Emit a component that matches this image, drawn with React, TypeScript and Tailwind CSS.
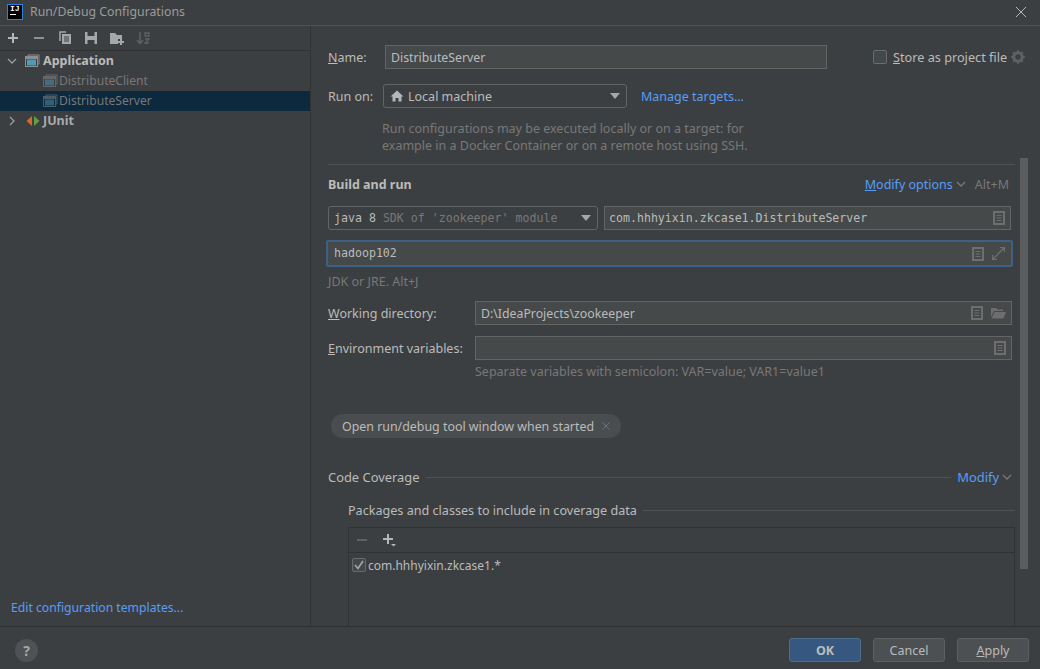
import React from "react";

const DocIcon = () => (
  <svg width="12" height="14" viewBox="0 0 12 14" className="shrink-0">
    <rect x="1" y="1" width="10" height="12" fill="none" stroke="#6e6e6e" strokeWidth="2" />
    <path d="M3.5 4.5h5M3.5 7h5M3.5 9.500h5" stroke="#6e6e6e" strokeWidth="1" />
  </svg>
);

const WindowIcon = ({ dim }: { dim?: boolean }) => (
  <svg width="15" height="14" viewBox="0 0 15 14" className="shrink-0" opacity={dim ? 0.5 : 1}>
    <path d="M3 2.500V1h11v9h-1.500" fill="none" stroke="#8c8f91" strokeWidth="1" />
    <rect x="0.500" y="2.500" width="12" height="10" fill="none" stroke="#8c8f91" strokeWidth="1" />
    <rect x="1" y="3" width="11" height="2" fill="#8c8f91" />
    <rect x="2" y="5.500" width="9" height="6" fill="#4f9bb8" />
  </svg>
);

const Chevron = ({ right, color = "#9a9c9e" }: { right?: boolean; color?: string }) => (
  <svg width="10" height="10" viewBox="0 0 10 10" className="shrink-0">
    <path d={right ? "M3 1l4 4-4 4" : "M1 3l4 4 4-4"} fill="none" stroke={color} strokeWidth="1.300" />
  </svg>
);

const Caret = () => (
  <svg width="10" height="6" viewBox="0 0 10 6" className="shrink-0">
    <path d="M0 0h10L5 6z" fill="#a5a7a9" />
  </svg>
);

function Toolbar() {
  return (
    <div className="h-[25px] flex items-center gap-[10px] pl-[5px] border-b border-[#323232]">
      <svg width="16" height="16" viewBox="0 0 16 16"><path d="M8 3v10M3 8h10" stroke="#b4b6b8" strokeWidth="2" /></svg>
      <svg width="16" height="16" viewBox="0 0 16 16"><path d="M3 8h10" stroke="#8f9193" strokeWidth="2" /></svg>
      <svg width="16" height="16" viewBox="0 0 16 16">
        <path d="M3 11V2h6" fill="none" stroke="#a5a7a9" strokeWidth="1.500" />
        <path d="M5 4h9v10H5z" fill="#a5a7a9" />
        <path d="M7 7h5M7 9h5M7 11h5" stroke="#3c3f41" strokeWidth="1" />
      </svg>
      <svg width="16" height="16" viewBox="0 0 16 16">
        <path d="M2 2h12v12H2z" fill="#a5a7a9" />
        <path d="M4.500 2h7v4h-7zM4.500 10h7v4h-7z" fill="#3c3f41" />
      </svg>
      <svg width="16" height="16" viewBox="0 0 16 16">
        <path d="M1 3h5l2 2h5v4H9v5H1z" fill="#a5a7a9" />
        <path d="M12 9v6M9 12h6" stroke="#a5a7a9" strokeWidth="2" />
      </svg>
      <svg width="16" height="16" viewBox="0 0 16 16">
        <path d="M5 2v11M2 10l3 3.500L8 10" fill="none" stroke="#5f6163" strokeWidth="1.500" />
        <path d="M10 3h4v3h-4zM10 9h4l-4 4h4" fill="none" stroke="#5f6163" strokeWidth="1.300" />
      </svg>
    </div>
  );
}

function Sidebar() {
  return (
    <div className="w-[311px] shrink-0 border-r border-[#323232] flex flex-col">
      <Toolbar />
      <div className="flex-1">
        <div className="h-5 flex items-center pl-[7px] pb-px">
          <Chevron />
          <span className="ml-[8px]"><WindowIcon /></span>
          <span className="ml-[3px] font-bold text-[#bbbbbb]">Application</span>
        </div>
        <div className="h-5 flex items-center pl-[43px] pb-px">
          <WindowIcon dim />
          <span className="ml-[1px] text-[#787878] text-[12.100px]">DistributeClient</span>
        </div>
        <div className="h-5 flex items-center pl-[43px] pb-px bg-[#0d293e]">
          <WindowIcon dim />
          <span className="ml-[1px] text-[#787878] text-[12.100px]">DistributeServer</span>
        </div>
        <div className="h-5 flex items-center pl-[7px] pb-px">
          <Chevron right />
          <svg width="14" height="12" viewBox="0 0 14 12" className="ml-[9px] shrink-0">
            <path d="M6 1L0.500 6 6 11z" fill="#d9662b" />
            <path d="M8 1l5.500 5L8 11z" fill="#62a03f" />
          </svg>
          <span className="ml-[3px] font-bold text-[#a9abad]">JUnit</span>
        </div>
      </div>
      <div className="h-[38px] pl-[11px] pt-[11px] text-[#589df6] text-[12.200px]">Edit configuration templates...</div>
    </div>
  );
}

function Field({
  className,
  mono,
  children,
  icons,
}: {
  className: string;
  mono?: boolean;
  children?: React.ReactNode;
  icons?: React.ReactNode;
}) {
  return (
    <div className={`h-6 flex items-center justify-between border border-[#646464] bg-[#45494a] pr-[5px] ${mono ? "pl-[4px]" : "pl-[5px]"} ${className}`}>
      <span className={mono ? "font-['DejaVu_Sans_Mono',monospace] text-[11.600px] text-[#bbbbbb]" : "text-[#bbbbbb] text-[12.300px]"}>{children}</span>
      {icons && <span className="flex items-center gap-[8px]">{icons}</span>}
    </div>
  );
}

function Form() {
  return (
    <div className="w-[687px] shrink-0 flex flex-col pt-[19px] whitespace-nowrap *:shrink-0">
      <div className="flex items-center h-6">
        <span className="w-[57px] shrink-0 text-[#bbbbbb]"><u>N</u>ame:</span>
        <Field className="w-[442px] shrink-0">DistributeServer</Field>
        <span className="ml-[46px] w-[14px] h-[14px] shrink-0 rounded-[2px] border border-[#6b6b6b] bg-[#43494a]" />
        <span className="ml-[6px] text-[#bbbbbb] text-[12.700px]"><u>S</u>tore as project file</span>
        <svg width="14" height="14" viewBox="0 0 14 14" className="ml-[4px] shrink-0">
          <circle cx="7" cy="7" r="4.300" fill="none" stroke="#5f6163" strokeWidth="3" />
          <path d="M7 0v14M0 7h14M2 2l10 10M12 2L2 12" stroke="#5f6163" strokeWidth="1.500" strokeDasharray="2.500 9" />
        </svg>
      </div>
      <div className="flex items-center h-6 mt-[15px]">
        <span className="w-[55px] text-[#bbbbbb]">Run on:</span>
        <div className="w-[244px] h-6 flex items-center rounded-[3px] border border-[#646464] pl-[6px] pr-[6px]">
          <svg width="14" height="12" viewBox="0 0 14 12" className="shrink-0">
            <path d="M7 0.500L0.500 6.500H2.500V11.500H5.500V8H8.500V11.500H11.500V6.500H13.500z" fill="#b4b6b8" />
          </svg>
          <span className="ml-[4px] flex-1 text-[#bbbbbb]">Local machine</span>
          <Caret />
        </div>
        <span className="ml-[14px] text-[#589df6]">Manage targets...</span>
      </div>
      <p className="ml-[54px] mt-[12px] text-[#787878] leading-[17px]">
        Run configurations may be executed locally or on a target: for
        <br />
        example in a Docker Container or on a remote host using SSH.
      </p>
      <div className="h-px bg-[#4f5153] mt-[10px]" />

      <div className="flex items-center h-[20px] mt-[9px]">
        <span className="font-bold text-[#bbbbbb] flex-1">Build and run</span>
        <span className="text-[#589df6]"><u>M</u>odify options</span>
        <span className="ml-[3px]"><Chevron color="#787878" /></span>
        <span className="ml-[9px] mr-[6px] text-[#787878]">Alt+M</span>
      </div>
      <div className="flex h-6 mt-[12px] gap-[6px]">
        <div className="w-[270px] h-6 flex items-center rounded-[3px] border border-[#646464] pl-[5px] pr-[6px] font-['DejaVu_Sans_Mono',monospace] text-[11.600px]">
          <span className="flex-1 text-[#bbbbbb]">java 8 <span className="text-[#787878]">SDK of 'zookeeper' module</span></span>
          <Caret />
        </div>
        <Field className="w-[407px]" mono icons={<DocIcon />}>com.hhhyixin.zkcase1.DistributeServer</Field>
      </div>
      <div className="h-[27px] w-[687px] -ml-[2px] mt-[10px] flex items-center justify-between rounded-[2px] border-2 border-[#3d6185] bg-[#45494a] pl-[6px] pr-[6px]">
        <span className="font-['DejaVu_Sans_Mono',monospace] text-[11.600px] text-[#bbbbbb]">hadoop102</span>
        <span className="flex items-center gap-[8px]">
          <DocIcon />
          <svg width="13" height="13" viewBox="0 0 13 13">
            <path d="M12.500 0.500L0.500 12.500M8 0.500h4.500V5M0.500 8v4.500H5" fill="none" stroke="#6e6e6e" strokeWidth="1.300" />
          </svg>
        </span>
      </div>
      <div className="mt-[6px] text-[#787878]">JDK or JRE. Alt+J</div>

      <div className="flex items-center h-6 mt-[11px]">
        <span className="w-[147px] text-[#bbbbbb]"><u>W</u>orking directory:</span>
        <Field
          className="w-[537px]"
          icons={
            <>
              <DocIcon />
              <svg width="15" height="12" viewBox="0 0 15 12">
                <path d="M0 1h5l1.500 1.500H12V4H3L0 10z" fill="#6e6e6e" />
                <path d="M3.500 5H15l-2.500 6.500H0.500z" fill="#6e6e6e" />
              </svg>
            </>
          }
        >
          D:\IdeaProjects\zookeeper
        </Field>
      </div>
      <div className="flex items-center h-6 mt-[11px]">
        <span className="w-[147px] text-[#bbbbbb]"><u>E</u>nvironment variables:</span>
        <Field className="w-[537px]" icons={<DocIcon />} />
      </div>
      <div className="ml-[147px] mt-[3px] text-[#787878]">Separate variables with semicolon: VAR=value; VAR1=value1</div>

      <div className="ml-[3px] mt-[34px] w-[290px] h-6 rounded-full bg-[#4a4d4f] flex items-center pl-[11px]">
        <span className="text-[#bbbbbb] text-[12.400px]">Open run/debug tool window when started</span>
        <svg width="8" height="8" viewBox="0 0 8 8" className="ml-[8px]">
          <path d="M0.500 0.500l7 7M7.500 0.500l-7 7" stroke="#6e7072" strokeWidth="1" />
        </svg>
      </div>

      <div className="flex items-center h-5 mt-[29px]">
        <span className="text-[#bbbbbb] text-[12.900px]">Code Coverage</span>
        <span className="flex-1 h-px bg-[#4f5153] ml-[6px] mr-[6px]" />
        <span className="text-[#589df6] text-[12.900px]">Modify</span>
        <span className="ml-[3px] mr-[3px]"><Chevron color="#787878" /></span>
      </div>
      <div className="flex items-center h-5 mt-[13px] ml-[20px]">
        <span className="text-[#bbbbbb] text-[12.600px]">Packages and classes to include in coverage data</span>
        <span className="flex-1 h-px bg-[#4f5153] ml-[6px]" />
      </div>
      <div className="ml-[20px] mt-[7px] h-[110px] border border-[#323232]">
        <div className="h-[25px] flex items-center gap-[13px] pl-[6px] border-b border-[#323232]">
          <svg width="14" height="14" viewBox="0 0 14 14"><path d="M2 7h10" stroke="#5f6163" strokeWidth="2" /></svg>
          <svg width="14" height="14" viewBox="0 0 14 14">
            <path d="M6 1v10M1 6h10" stroke="#b4b6b8" strokeWidth="2" />
            <path d="M9 11h5l-2.500 2.500z" fill="#b4b6b8" />
          </svg>
        </div>
        <div className="h-5 mt-[2px] flex items-center pl-[3px]">
          <span className="w-[14px] h-[14px] rounded-[2px] border border-[#6b6b6b] bg-[#43494a] flex items-center justify-center">
            <svg width="10" height="10" viewBox="0 0 10 10"><path d="M1 5l3 3.500L9 1" fill="none" stroke="#a7a7a7" strokeWidth="1.600" /></svg>
          </span>
          <span className="ml-[2px] text-[#bbbbbb] text-[12px]">com.hhhyixin.zkcase1.*</span>
        </div>
      </div>
    </div>
  );
}

export default function App() {
  return (
    <div className="w-[1040px] h-[669px] overflow-hidden bg-[#3c3f41] flex flex-col font-['Noto_Sans',sans-serif] text-[12.500px] leading-[17px]">
      <div className="h-[26px] shrink-0 flex items-center border-b border-[#505254] pl-[7px] pr-[13px] pb-[2px]">
        <div className="w-4 h-4 bg-black border border-[#2f7fdc] flex flex-col pl-[2px] shrink-0">
          <span className="text-white text-[8px] leading-[8px] font-bold font-['Liberation_Mono',monospace]">IJ</span>
          <span className="w-[6px] h-px bg-white mt-px" />
        </div>
        <span className="ml-[7px] flex-1 text-[#9a9c9e] text-[12.300px]">Run/Debug Configurations</span>
        <svg width="12" height="12" viewBox="0 0 12 12">
          <path d="M1 1l10 10M11 1L1 11" stroke="#b4b6b8" strokeWidth="1" />
        </svg>
      </div>

      <div className="flex h-[600px] shrink-0 overflow-hidden">
        <Sidebar />
        <div className="flex-1 flex pl-[17px] overflow-hidden">
          <Form />
          <div className="ml-[5px] w-2 mt-[132px] h-[411px] bg-[#5a5c5e] shrink-0" />
        </div>
      </div>

      <div className="flex-1 flex items-center border-t border-[#323232] pl-[15px] pr-[11px] pt-[4px]">
        <div className="w-[23px] h-[23px] rounded-full bg-[#4e5254] flex items-center justify-center font-bold text-[14px] text-[#a5a7a9]">?</div>
        <div className="flex-1" />
        <button className="w-[72px] h-[24px] rounded-[3px] border border-[#4c708c] bg-[#365880] font-bold text-[#bbbbbb]">OK</button>
        <button className="ml-[12px] w-[72px] h-[24px] rounded-[3px] border border-[#5e6060] bg-[#4c5052] text-[#bbbbbb]">Cancel</button>
        <button className="ml-[12px] w-[72px] h-[24px] rounded-[3px] border border-[#5e6060] bg-[#4c5052] text-[#bbbbbb]"><u>A</u>pply</button>
      </div>
    </div>
  );
}
